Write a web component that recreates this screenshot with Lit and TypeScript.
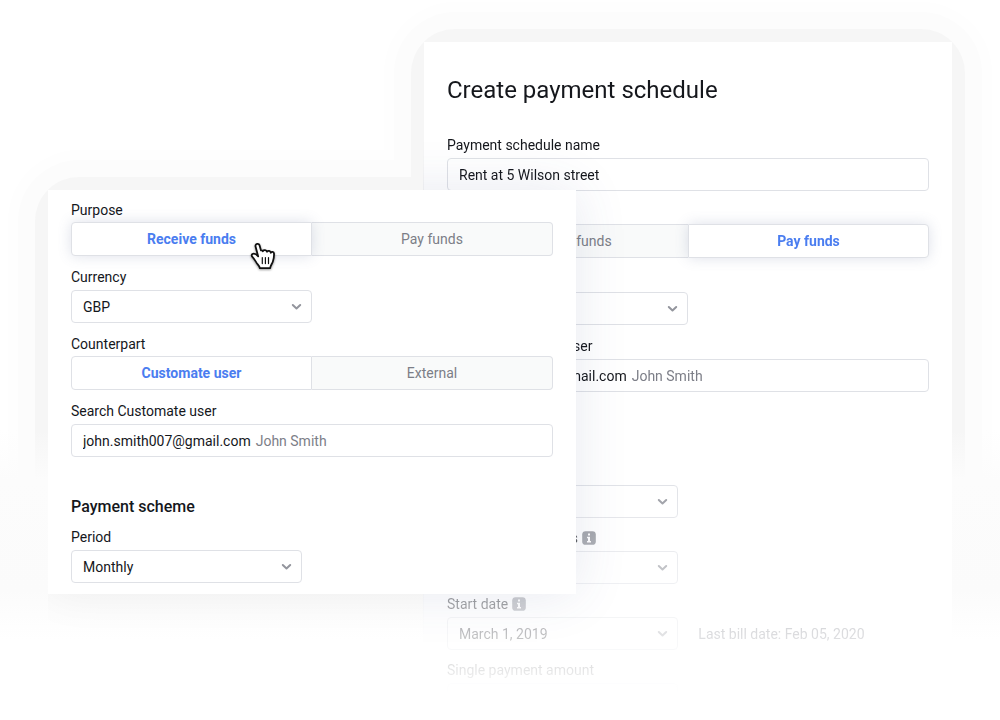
import { LitElement, html, css, svg, nothing } from "lit";
import { customElement, property } from "lit/decorators.js";
import { classMap } from "lit/directives/class-map.js";

const chevron = svg`<svg class="chevron" width="11" height="8" viewBox="0 0 11 8" fill="none" aria-hidden="true">
  <path d="M1.8 2 5.5 5.5 9.2 2" stroke="#93959d" stroke-width="2" stroke-linecap="round" stroke-linejoin="round"/>
</svg>`;

const info = svg`<svg class="info" width="14" height="14" viewBox="0 0 14 14" aria-hidden="true">
  <rect x="0.2" y="0.2" width="13.6" height="13.6" rx="3.4" fill="#85878f"/>
  <path d="M6 2.6h2v2H6zM5 5.8h3v4.2h1v1.4H5V10h1V7.2H5z" fill="#fff"/>
</svg>`;

const hand = svg`<svg class="hand" width="26" height="30" viewBox="0 0 26 30" aria-hidden="true">
  <path d="M7.2 1.9C5.8 2.2 5.2 3.4 5.6 4.8L8.2 14.4C6.6 12.6 4.4 11.4 2.9 11.8C1.3 12.3 1.4 13.9 2.4 14.9C4.2 16.7 5.2 18.9 6.8 21.2C8 22.8 9.4 23.8 9.9 26.2H20.2C20.4 23.6 22 22 22.8 19.8C23.7 17.2 24.2 14 24 11.4C23.8 9.6 21.6 9.4 20.8 10.8C20.6 8.8 18 8.2 17 9.8C16.4 8 13.8 7.6 12.8 9.2C12.4 8.4 11.6 8.2 11 8.4L9.6 3.4C9.2 2.2 8.4 1.7 7.2 1.9Z"
    fill="#fff" stroke="#111" stroke-width="1.8" stroke-linejoin="round"/>
  <path d="M12.3 15.6v6M15.4 15.6v6M18.5 15.6v6" stroke="#111" stroke-width="1.2" stroke-linecap="round"/>
</svg>`;

const shared = css`
  :host {
    display: block;
    font-family: Roboto, "Liberation Sans", sans-serif;
    font-size: 14px;
    color: #15171c;
  }
  *,
  *::before,
  *::after {
    box-sizing: border-box;
  }
  .label {
    display: flex;
    align-items: center;
    gap: 4px;
    line-height: 20px;
    margin-bottom: 3px;
  }
  .info {
    display: block;
  }
`;

@customElement("toggle-field")
class ToggleField extends LitElement {
  @property() label = "";
  @property({ type: Array }) options: string[] = [];
  @property({ type: Number }) selected = 0;
  @property({ type: Boolean }) raised = false;
  @property({ type: Boolean }) pointer = false;

  static styles = [
    shared,
    css`
      .label {
        margin-bottom: 2px;
      }
      .group {
        display: grid;
        grid-template-columns: 1fr 1fr;
        height: 34px;
      }
      button {
        position: relative;
        margin: 0;
        padding: 0;
        border: 1px solid #dfe1e6;
        background: #f9fafa;
        color: #7c7e87;
        font: inherit;
      }
      button:first-child {
        border-radius: 4px 0 0 4px;
      }
      button:last-child {
        border-radius: 0 4px 4px 0;
      }
      button:first-child:not(.on) {
        border-right: 0;
      }
      button:last-child:not(.on) {
        border-left: 0;
      }
      .on {
        background: #fff;
        color: #4a7df0;
        font-weight: 700;
        z-index: 1;
      }
      .raised {
        box-shadow: 0 0 14px rgba(90, 105, 150, 0.2);
      }
      .hand {
        position: absolute;
        right: 35px;
        top: 19px;
        filter: drop-shadow(0 1px 1px rgba(0, 0, 0, 0.4));
      }
    `,
  ];

  render() {
    return html`
      <div class="label" id="name">${this.label}</div>
      <div class="group" role="group" aria-labelledby="name">
        ${this.options.map((text, i) => {
          const on = i === this.selected;
          return html`<button
            type="button"
            aria-pressed=${on ? "true" : "false"}
            class=${classMap({ on, raised: on && this.raised })}
            @click=${() => (this.selected = i)}
          >${text}${on && this.pointer ? hand : nothing}</button>`;
        })}
      </div>
    `;
  }
}

@customElement("select-field")
class SelectField extends LitElement {
  @property() label = "";
  @property() value = "";
  @property() note = "";
  @property({ type: Boolean }) hint = false;
  @property({ type: Boolean }) half = false;

  static styles = [
    shared,
    css`
      .row {
        display: flex;
        align-items: center;
        gap: 20px;
      }
      .box {
        display: grid;
        align-items: center;
        flex: none;
        width: 48%;
      }
      .half {
        width: 50%;
      }
      select,
      .chevron {
        grid-area: 1 / 1;
      }
      select {
        appearance: none;
        width: 100%;
        height: 33px;
        margin: 0;
        padding: 0 32px 0 11px;
        border: 1px solid #dfe1e6;
        border-radius: 4px;
        background: transparent;
        color: inherit;
        font: inherit;
      }
      .chevron {
        justify-self: end;
        margin-right: 10px;
        pointer-events: none;
      }
      .note {
        color: #7c7e87;
        white-space: nowrap;
      }
    `,
  ];

  render() {
    return html`
      <label class="label" for="pick">${this.label}${this.hint ? info : nothing}</label>
      <div class="row">
        <div class=${classMap({ box: true, half: this.half })}>
          <select id="pick"><option>${this.value}</option></select>
          ${chevron}
        </div>
        ${this.note ? html`<span class="note">${this.note}</span>` : nothing}
      </div>
    `;
  }
}

@customElement("text-field")
class TextField extends LitElement {
  @property() label = "";
  @property() value = "";
  @property() suffix = "";

  static styles = [
    shared,
    css`
      .box {
        display: flex;
        align-items: center;
        gap: 5px;
        height: 33px;
        padding: 0 11px;
        border: 1px solid #dfe1e6;
        border-radius: 4px;
      }
      input {
        flex: 1;
        min-width: 0;
        margin: 0;
        padding: 0;
        border: 0;
        outline: 0;
        background: transparent;
        color: inherit;
        font: inherit;
      }
      .fit {
        flex: none;
        field-sizing: content;
      }
      .suffix {
        color: #7c7e87;
      }
    `,
  ];

  render() {
    return html`
      <label class="label" for="text">${this.label}</label>
      <div class="box">
        <input id="text" type="text" class=${classMap({ fit: !!this.suffix })} .value=${this.value} />
        ${this.suffix ? html`<span class="suffix">${this.suffix}</span>` : nothing}
      </div>
    `;
  }
}

@customElement("app-root")
class AppRoot extends LitElement {
  static styles = [
    shared,
    css`
      .scene {
        display: grid;
        grid-template-columns: 48fr 376fr 152fr 376fr 48fr;
        grid-template-rows: 42px 148px auto 1fr;
        height: 100vh;
        overflow: hidden;
        background: #fff;
        isolation: isolate;
      }
      .back-area {
        grid-area: 2 / 3 / 5 / 5;
      }
      .front-area {
        grid-area: 3 / 2 / 4 / 4;
      }
      .halo {
        margin: -13px;
        border-radius: 44px;
        background: #f6f6f6;
        box-shadow: 0 0 0 17px #fcfcfc, 0 0 0 27px #fefefe;
        mix-blend-mode: darken;
      }
      .fade {
        position: relative;
        grid-area: 1 / 1 / 5 / 6;
        background: linear-gradient(
          rgba(252, 252, 252, 0) 430px,
          #fcfcfc 480px,
          #fbfbfb 590px,
          #fff 640px
        );
      }
      .card {
        position: relative;
        background: #fff;
      }
      .back-form {
        padding: 32px 23px 0;
        mask-image: linear-gradient(#000 428px, transparent 653px);
      }
      .front::before,
      .front::after {
        content: "";
        position: absolute;
        inset: 0;
        pointer-events: none;
      }
      .front::before {
        box-shadow: 0 0 50px rgba(60, 75, 130, 0.12);
        clip-path: inset(-60px -60px -60px 71%);
      }
      .front::after {
        box-shadow: 0 0 44px rgba(0, 0, 0, 0.06);
        clip-path: inset(100% 29% -60px 0);
      }
      .front-form {
        position: relative;
        padding: 10px 23px 11px;
        background: #fff;
      }
      h1 {
        margin: 0 0 29px;
        font-size: 24px;
        font-weight: 400;
        line-height: 32px;
      }
      h2 {
        margin: 0;
        font-size: 16px;
        font-weight: 500;
        line-height: 20px;
      }
      .fields,
      .scheme {
        display: flex;
        flex-direction: column;
        gap: 11px;
      }
      .scheme {
        gap: 10px;
        margin-top: 40px;
      }
    `,
  ];

  render() {
    return html`
      <main class="scene">
        <div class="halo back-area"></div>
        <div class="halo front-area"></div>
        <div class="fade"></div>

        <section class="card back-area">
          <form class="back-form">
            <h1>Create payment schedule</h1>
            <div class="fields">
              <text-field label="Payment schedule name" value="Rent at 5 Wilson street"></text-field>
              <toggle-field label="Purpose" .options=${["Receive funds", "Pay funds"]} .selected=${1} raised></toggle-field>
              <select-field label="Currency" value="GBP" half></select-field>
              <text-field label="Search Customate user" value="john.smith007@gmail.com" suffix="John Smith"></text-field>
            </div>
            <div class="scheme">
              <h2>Payment scheme</h2>
              <select-field label="Period" value="Monthly"></select-field>
              <select-field label="Number of payments" value="12" hint></select-field>
              <select-field label="Start date" value="March 1, 2019" note="Last bill date: Feb 05, 2020" hint></select-field>
              <select-field label="Single payment amount" value=""></select-field>
            </div>
          </form>
        </section>

        <section class="card front front-area">
          <form class="front-form">
            <div class="fields">
              <toggle-field label="Purpose" .options=${["Receive funds", "Pay funds"]} raised pointer></toggle-field>
              <select-field label="Currency" value="GBP" half></select-field>
              <toggle-field label="Counterpart" .options=${["Customate user", "External"]}></toggle-field>
              <text-field label="Search Customate user" value="john.smith007@gmail.com" suffix="John Smith"></text-field>
            </div>
            <div class="scheme">
              <h2>Payment scheme</h2>
              <select-field label="Period" value="Monthly"></select-field>
            </div>
          </form>
        </section>
      </main>
    `;
  }
}
